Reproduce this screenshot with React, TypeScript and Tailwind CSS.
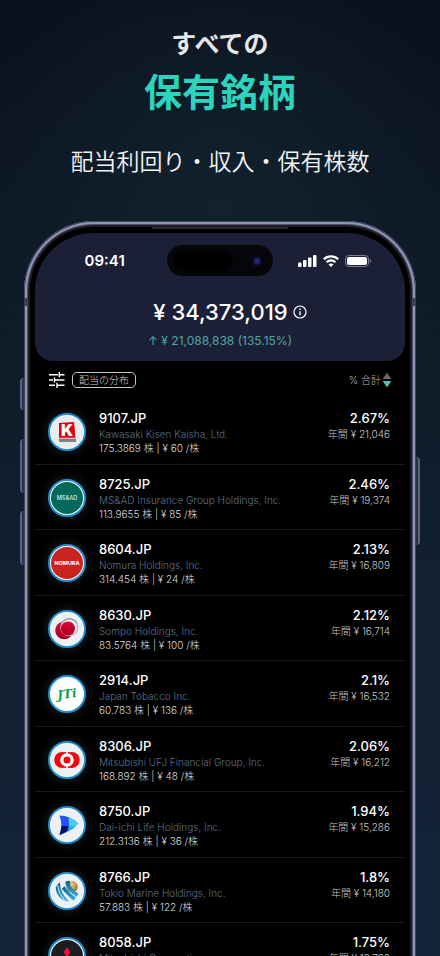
import React from "react";

const FONT = "font-['Inter','Noto_Sans_CJK_JP',sans-serif]";

function KawasakiLogo() {
  return (
    <svg viewBox="0 0 34 34" className="size-full">
      <rect width="34" height="34" fill="#e8ecf0" />
      <path d="M8.500 7.500 24.500 6.500 26 23H8.500Z" fill="#e2000f" />
      <text x="17" y="21" textAnchor="middle" fontFamily="Inter" fontSize="17" fontWeight="900" fill="#fff">
        K
      </text>
      <rect x="8.500" y="24" width="18" height="3.500" fill="#7d7d80" />
    </svg>
  );
}

function MsadLogo() {
  return (
    <svg viewBox="0 0 34 34" className="size-full">
      <rect width="34" height="34" fill="#04695a" />
      <text x="17" y="19" textAnchor="middle" fontFamily="Inter" fontSize="6" fontWeight="600" fill="#c4ddd6">
        MS&amp;AD
      </text>
    </svg>
  );
}

function NomuraLogo() {
  return (
    <svg viewBox="0 0 34 34" className="size-full">
      <rect width="34" height="34" fill="#ca2420" />
      <text x="17" y="19" textAnchor="middle" fontFamily="Inter" fontSize="5.800" fontWeight="700" fill="#fff">
        NOMURA
      </text>
    </svg>
  );
}

function SompoLogo() {
  return (
    <svg viewBox="0 0 34 34" className="size-full">
      <defs>
        <linearGradient id="sompo-red" x1="0" y1="0" x2="0" y2="1">
          <stop offset="0" stopColor="#e4003a" />
          <stop offset="1" stopColor="#a80022" />
        </linearGradient>
      </defs>
      <rect width="34" height="34" fill="#eef1f4" />
      <circle cx="14" cy="18.500" r="9.500" fill="url(#sompo-red)" />
      <circle cx="19.500" cy="15" r="9" fill="#eef1f4" stroke="#b9bcc0" strokeWidth="1.600" />
      <circle cx="18" cy="16.500" r="7.500" fill="url(#sompo-red)" />
      <path d="M12 10a9 9 0 0 1 15.500 1" fill="none" stroke="#86898d" strokeWidth="1" />
    </svg>
  );
}

function JtLogo() {
  return (
    <svg viewBox="0 0 34 34" className="size-full">
      <rect width="34" height="34" fill="#fff" />
      <text
        x="17"
        y="21.500"
        textAnchor="middle"
        fontFamily="DejaVu Serif"
        fontSize="13"
        fontWeight="700"
        fontStyle="italic"
        fill="#0ba14e"
        transform="rotate(-7 17 17)"
      >
        JTi
      </text>
    </svg>
  );
}

function MufgLogo() {
  return (
    <svg viewBox="0 0 34 34" className="size-full">
      <rect width="34" height="34" fill="#eceff3" />
      <ellipse cx="12" cy="17" rx="8.500" ry="8.500" fill="#f2050c" />
      <ellipse cx="22" cy="17" rx="8.500" ry="8.500" fill="#f2050c" />
      <path d="M15 8.500a9.500 9.500 0 0 0-4.200 8.500A9.500 9.500 0 0 0 15 25.500h4a9.500 9.500 0 0 0 4.200-8.500A9.500 9.500 0 0 0 19 8.500Z" fill="#f2050c" />
      <circle cx="17" cy="17" r="5.500" fill="#f2050c" stroke="#fff" strokeWidth="3.500" />
      <path d="M16 7h2v4h-2ZM16 23h2v4h-2Z" fill="#eceff3" />
    </svg>
  );
}

function DaiichiLogo() {
  return (
    <svg viewBox="0 0 34 34" className="size-full">
      <rect width="34" height="34" fill="#eceff3" />
      <path d="M9 7q11 0 20 8.500-8 8.500-20 12 4-11 0-20.500Z" fill="#1f4fff" />
      <path d="M18.500 8.500q6 2 10.500 7-4 5-11 8.500Q20 16 18.500 8.500Z" fill="#43cdfb" />
      <path d="M9 27.500q2-5 2-9.500h8q0 4-3 6.500Z" fill="#06106b" />
      <path d="M19 18.500h7q-4 3.500-8 5.500Z" fill="#1eaaf0" />
    </svg>
  );
}

function TokioMarineLogo() {
  return (
    <svg viewBox="0 0 34 34" className="size-full">
      <defs>
        <radialGradient id="tokio-gold" cx="0.4" cy="0.3" r="0.8">
          <stop offset="0" stopColor="#f3d58a" />
          <stop offset="1" stopColor="#94640c" />
        </radialGradient>
        <linearGradient id="tokio-blue" x1="0" y1="0" x2="0" y2="1">
          <stop offset="0" stopColor="#0a5f92" />
          <stop offset="1" stopColor="#35b4de" />
        </linearGradient>
      </defs>
      <rect width="34" height="34" fill="#eceff3" />
      <circle cx="22.500" cy="12.500" r="6" fill="url(#tokio-gold)" />
      <path d="M5 13Q7 9 9.500 8q0 11 9.500 20-4 0-7-2-7-5-7-13Z" fill="url(#tokio-blue)" />
      <path d="M11.500 15q5 6 12 12 2-1 3-3-8-5-12-12-2 1-3 3Z" fill="url(#tokio-blue)" />
      <path d="M15 7.500q2-1.500 5-1.500 0 9 9 13.500-.5 2-1.500 3.500Q16 17 15 7.500Z" fill="url(#tokio-blue)" />
      <path d="M7 11q1 9 8 16.500" fill="none" stroke="#eceff3" />
    </svg>
  );
}

function MitsubishiLogo() {
  return (
    <svg viewBox="0 0 34 34" className="size-full">
      <rect width="34" height="34" fill="#1b1d21" />
      <path d="m17 7.500 3.500 5.500-3.500 6-3.500-6Z" fill="#f0103c" />
      <path d="m16.500 19-3.500 6H6l3.500-6ZM17.500 19l3.500 6h7l-3.500-6Z" fill="#f0103c" />
    </svg>
  );
}

const holdings = [
  { code: "9107.JP", name: "Kawasaki Kisen Kaisha, Ltd.", shares: "175.3869", dividend: "60", pct: "2.67%", annual: "21,046", Logo: KawasakiLogo },
  { code: "8725.JP", name: "MS&AD Insurance Group Holdings, Inc.", shares: "113.9655", dividend: "85", pct: "2.46%", annual: "19,374", Logo: MsadLogo },
  { code: "8604.JP", name: "Nomura Holdings, Inc.", shares: "314.454", dividend: "24", pct: "2.13%", annual: "16,809", Logo: NomuraLogo },
  { code: "8630.JP", name: "Sompo Holdings, Inc.", shares: "83.5764", dividend: "100", pct: "2.12%", annual: "16,714", Logo: SompoLogo },
  { code: "2914.JP", name: "Japan Tobacco Inc.", shares: "60.783", dividend: "136", pct: "2.1%", annual: "16,532", Logo: JtLogo },
  { code: "8306.JP", name: "Mitsubishi UFJ Financial Group, Inc.", shares: "168.892", dividend: "48", pct: "2.06%", annual: "16,212", Logo: MufgLogo },
  { code: "8750.JP", name: "Dai-ichi Life Holdings, Inc.", shares: "212.3136", dividend: "36", pct: "1.94%", annual: "15,286", Logo: DaiichiLogo },
  { code: "8766.JP", name: "Tokio Marine Holdings, Inc.", shares: "57.883", dividend: "122", pct: "1.8%", annual: "14,180", Logo: TokioMarineLogo },
  { code: "8058.JP", name: "Mitsubishi Corporation", shares: "88.214", dividend: "110", pct: "1.75%", annual: "13,790", Logo: MitsubishiLogo },
];

function StatusBar() {
  return (
    <div className="grid grid-cols-3 items-center px-3 pt-3">
      <span className="justify-self-center text-[15px] leading-[31px] font-semibold">09:41</span>
      <div className="flex h-[31px] w-[106px] items-center justify-between justify-self-center rounded-full bg-[#05060a] pr-2 pl-1.5">
        <span className="h-5 w-15 rounded-full bg-black" />
        <span className="flex size-4 items-center justify-center rounded-full bg-[#07070f]">
          <span className="size-2 rounded-full bg-radial from-[#2b2f8c] to-[#0a0b2a]" />
        </span>
      </div>
      <div className="flex items-center gap-1.5 justify-self-center">
        <svg width="19" height="12" viewBox="0 0 19 12" fill="#fff">
          <rect x="0" y="7.500" width="3.500" height="4.500" rx="1" />
          <rect x="5" y="5" width="3.500" height="7" rx="1" />
          <rect x="10" y="2.500" width="3.500" height="9.500" rx="1" />
          <rect x="15" y="0" width="3.500" height="12" rx="1" />
        </svg>
        <svg width="16" height="12" viewBox="0 0 16 12" fill="none" stroke="#fff" strokeWidth="2.200">
          <path d="M0.800 4.300a10.200 10.200 0 0 1 14.400 0" />
          <path d="M3.500 7.200a6.500 6.500 0 0 1 9 0" />
          <path d="M8 12 5.500 9.600a3.400 3.400 0 0 1 5 0Z" fill="#fff" stroke="none" />
        </svg>
        <svg width="27" height="12" viewBox="0 0 27 12">
          <rect x="0.500" y="0.500" width="23" height="11" rx="3.500" fill="none" stroke="#7c7f8e" />
          <rect x="2" y="2" width="20" height="8" rx="2.200" fill="#fff" />
          <path d="M24.800 4v4q1.400-.6 1.400-2t-1.400-2Z" fill="#7c7f8e" />
        </svg>
      </div>
    </div>
  );
}

function Summary() {
  return (
    <header className="rounded-t-[58px] rounded-b-[18px] bg-[#1b2036] pb-3">
      <StatusBar />
      <div className="mt-5 flex items-center justify-center gap-[5px] pl-5">
        <h2 className="text-[22px] leading-8 font-medium">¥ 34,373,019</h2>
        <button type="button" aria-label="Info">
          <svg width="14" height="14" viewBox="0 0 14 14" fill="none" stroke="#fff">
            <circle cx="7" cy="7" r="6" strokeWidth="1.200" />
            <path d="M7 6.200v4" strokeWidth="1.400" />
            <path d="M7 3.500v1.400" strokeWidth="1.500" />
          </svg>
        </button>
      </div>
      <p className="mt-1 text-center text-xs leading-[17px] text-[#4aa9a4]">↑ ¥ 21,088,838 (135.15%)</p>
    </header>
  );
}

function Toolbar() {
  return (
    <div className="flex items-center justify-between px-[13px] py-[11px]">
      <div className="flex items-center gap-[7px]">
        <button type="button" aria-label="Filter">
          <svg width="17" height="16" viewBox="0 0 17 16" fill="none" stroke="#fff" strokeWidth="1.400">
            <path d="M1 2.700h9M12 2.700h4.500M11.300 0v5.200M1 8h4M7 8h9.500M6.500 5.400v5.200M1 13.300h6M9.500 13.300h7M9 10.800V16" />
          </svg>
        </button>
        <button type="button" className="rounded-[5px] border border-[#c8c8c8] px-1.5 text-[10px] leading-[14px] font-light text-[#d0d0d0]">
          配当の分布
        </button>
      </div>
      <button type="button" className="flex items-center gap-px text-[10px] leading-4 font-light text-[#b4b4b4]">
        % 合計
        <svg width="10" height="16" viewBox="0 0 10 16">
          <path d="M5 0.500 9.300 7H0.700Z" fill="#666" />
          <path d="M5 15.500 9.300 9H0.700Z" fill="#4fc0b8" />
        </svg>
      </button>
    </div>
  );
}

function HoldingRow({ item }: { item: (typeof holdings)[number] }) {
  const { Logo } = item;
  return (
    <li className="flex gap-[13px] border-b border-[#1a1a1a] pt-2.5 pr-[15px] pl-[13px] odd:pb-[9px] even:pb-2">
      <div className="mt-1 size-[38px] shrink-0 overflow-hidden rounded-full border-2 border-[#1f8fd0] bg-white p-px shadow-[0_0_8px_2px_#16191c]">
        <div className="size-full overflow-hidden rounded-full">
          <Logo />
        </div>
      </div>
      <div className="min-w-0 flex-1">
        <h3 className="text-[13px] leading-[18px] font-medium">{item.code}</h3>
        <p className="truncate text-[10px] leading-[14px] font-light text-[#5f7389]">{item.name}</p>
        <p className="text-[10px] leading-[14px] font-light text-[#dcdcdc]">
          {item.shares} 株 | ¥ {item.dividend} /株
        </p>
      </div>
      <div className="text-right">
        <p className="text-[13px] leading-[18px] font-medium">{item.pct}</p>
        <p className="text-[10px] leading-[14px] font-light text-[#c8c8c8]">年間 ¥ {item.annual}</p>
      </div>
    </li>
  );
}

export default function App() {
  return (
    <main
      className={`h-screen overflow-hidden bg-[radial-gradient(ellipse_60%_30%_at_50%_22%,#11222d_0%,transparent_100%),linear-gradient(#0a101d,#0d1825_25%,#112130_60%,#142438)] text-white ${FONT}`}
    >
      <div className="flex flex-col items-center pt-6 text-center">
        <h1 className="font-['Noto_Sans_CJK_JP',sans-serif] font-bold">
          <span className="block text-[25px] leading-9 text-[#e6e7ea]">すべての</span>
          <span className="block text-[38px] leading-[60px] text-[#2ad4bd]">保有銘柄</span>
        </h1>
        <p className="mt-6 font-['Noto_Sans_CJK_JP',sans-serif] text-[23px] leading-8 font-[350] text-[#f2f4f6]">
          配当利回り・収入・保有株数
        </p>
      </div>

      {/* Phone */}
      <section className="relative mx-6 mt-[45px] rounded-t-[70px] bg-black px-[11px] pt-3 shadow-[inset_0_0_0_1px_#3f4359,inset_0_0_0_3px_#8f96b8,inset_0_0_0_4px_#4c506a,inset_0_0_0_6px_#1d1d22]">
        {/* Side buttons */}
        <span className="absolute top-[157px] -left-1 h-8 w-1 rounded-l-sm border-l-2 border-[#5c627c] bg-[#2b3046]" />
        <span className="absolute top-[218px] -left-1 h-[54px] w-1 rounded-l-sm border-l-2 border-[#5c627c] bg-[#2b3046]" />
        <span className="absolute top-[290px] -left-1 h-[54px] w-1 rounded-l-sm border-l-2 border-[#5c627c] bg-[#2b3046]" />
        <span className="absolute top-[236px] -right-1 h-[88px] w-1 rounded-r-sm border-r-2 border-[#5c627c] bg-[#2b3046]" />
        {/* Antenna bands */}
        <span className="absolute top-[77px] left-0 h-2 w-1 bg-[#3d4157]" />
        <span className="absolute top-[77px] right-0 h-2 w-1 bg-[#3d4157]" />
        {/* Speaker */}
        <span className="absolute inset-x-0 top-1.5 mx-auto h-0.5 w-[136px] rounded-full bg-[#2a2a2e]" />

        <Summary />
        <Toolbar />
        <ul>
          {holdings.map((item) => (
            <HoldingRow key={item.code} item={item} />
          ))}
        </ul>
      </section>
    </main>
  );
}
